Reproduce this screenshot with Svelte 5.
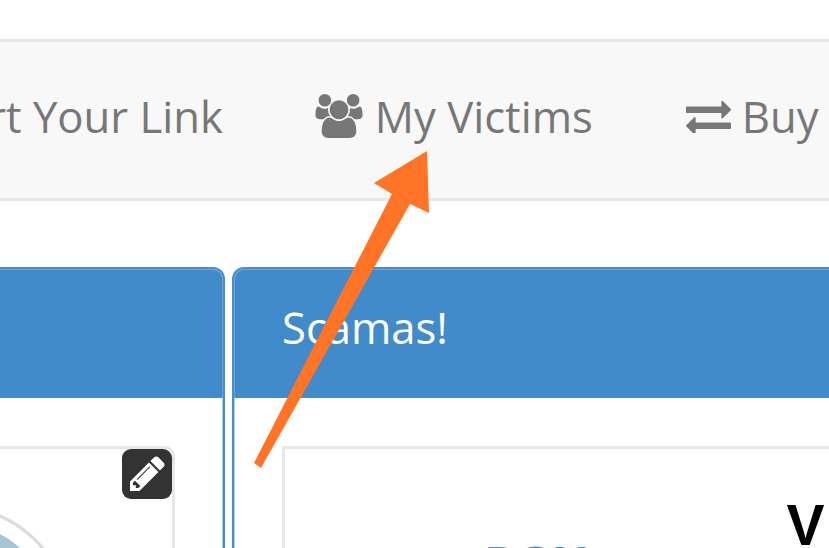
<script>
  let links = [
    { label: 'Report Your Link', icon: null },
    { label: 'My Victims', icon: 'users' },
    { label: 'Buy Scamas', icon: 'exchange' }
  ];
</script>

<div class="page">
  <nav>
    {#each links as link}
      <a href="#top" class="link">
        {#if link.icon === 'users'}
          <svg class="users" viewBox="64 0 1920 1792" aria-hidden="true">
            <path d="M657 896q-162 5-265 128h-134q-82 0-138-40.500t-56-118.500q0-353 124-353 6 0 43.500 21t97.500 42.500 119 21.500q67 0 133-23-5 37-5 66 0 139 81 256zm1071 637q0 120-73 189.500t-194 69.500h-874q-121 0-194-69.500t-73-189.500q0-53 3.500-103.500t14-109 26.500-108.500 43-97.500 62-81 85.500-53.500 111.500-20q10 0 43 21.500t73 48 107 48 135 21.500 135-21.500 107-48 73-48 43-21.500q61 0 111.500 20t85.500 53.500 62 81 43 97.500 26.500 108.500 14 109 3.500 103.500zm-1024-1277q0 106-75 181t-181 75-181-75-75-181 75-181 181-75 181 75 75 181zm704 384q0 159-112.500 271.500t-271.500 112.500-271.500-112.500-112.500-271.500 112.500-271.500 271.500-112.500 271.500 112.500 112.500 271.500zm576 225q0 78-56 118.500t-138 40.500h-134q-103-123-265-128 81-117 81-256 0-29-5-66 66 23 133 23 59 0 119-21.500t97.500-42.500 43.500-21q124 0 124 353zm-128-609q0 106-75 181t-181 75-181-75-75-181 75-181 181-75 181 75 75 181z" />
          </svg>
        {:else if link.icon === 'exchange'}
          <svg class="exchange" viewBox="0 256 1792 1312" aria-hidden="true">
            <path d="M1792 1184v192q0 13-9.500 22.500t-22.500 9.500h-1376v192q0 13-9.500 22.500t-22.500 9.500q-12 0-24-10l-319-320q-9-9-9-22 0-14 9-23l320-320q9-9 23-9 13 0 22.500 9.500t9.500 22.500v192h1376q13 0 22.500 9.500t9.500 22.500zm0-544q0 14-9 23l-320 320q-9 9-23 9-13 0-22.500-9.500t-9.500-22.500v-192h-1376q-13 0-22.500-9.500t-9.500-22.500v-192q0-13 9.500-22.500t22.500-9.500h1376v-192q0-14 9-23t23-9q12 0 24 10l319 319q9 9 9 23z" />
          </svg>
        {/if}
        {link.label}
      </a>
    {/each}
  </nav>

  <div class="panels">
    <section class="panel left">
      <div class="head"></div>
      <div class="body">
        <div class="card">
          <button class="edit" aria-label="Edit">
            <svg viewBox="128 128 1536 1536" aria-hidden="true">
              <path d="M491 1536l91-91-235-235-91 91v107h128v128h107zm523-928q0-22-22-22-10 0-17 7l-542 542q-7 7-7 17 0 22 22 22 10 0 17-7l542-542q7-7 7-17zm-54-192l416 416-832 832h-416v-416zm683 96q0 53-37 90l-166 166-416-416 166-165q36-38 90-38 53 0 91 38l235 234q37 39 37 91z" />
            </svg>
          </button>
          <div class="avatar"></div>
        </div>
      </div>
    </section>

    <section class="panel right">
      <div class="head"><h2>Scamas!</h2></div>
      <div class="body">
        <div class="card wide">
          <span class="logo">BOX</span>
          <span class="big">V</span>
        </div>
      </div>
    </section>
  </div>

  <svg class="arrow" viewBox="0 0 829 548" aria-hidden="true">
    <polygon points="254,463 261,468 410,204 429,213 427,151 374,183 392,194" />
  </svg>
</div>

<style>
  :global(body) {
    margin: 0;
    background: #fff;
  }
  .page {
    position: relative;
    width: 829px;
    height: 548px;
    overflow: hidden;
    padding-top: 39px;
    box-sizing: border-box;
    font-family: 'Open Sans', sans-serif;
  }
  nav {
    display: flex;
    align-items: center;
    gap: 93px;
    height: 156px;
    margin-left: -116px;
    background: #f8f8f8;
    border-top: 3px solid #e7e7e7;
    border-bottom: 3px solid #e7e7e7;
    width: 1200px;
  }
  .link {
    display: flex;
    align-items: center;
    gap: 12px;
    margin-bottom: 8px;
    color: #777;
    font-size: 43.6px;
    text-decoration: none;
    white-space: nowrap;
  }
  .link:first-child {
    margin-right: -1px;
  }
  .users {
    width: 48px;
    height: 44px;
    fill: #777;
  }
  .exchange {
    width: 45px;
    height: 33px;
    margin-right: -1px;
    fill: #777;
  }
  .panels {
    display: flex;
    gap: 7px;
    margin-top: 66px;
    margin-left: -300px;
  }
  .panel {
    border: 2px solid #4a8ec9;
    border-bottom: 0;
    border-radius: 12px 12px 0 0;
    box-shadow: inset 0 0 0 1px #a7cbe8;
    height: 290px;
    box-sizing: border-box;
    flex: none;
  }
  .left {
    width: 525px;
  }
  .right {
    width: 800px;
  }
  .head {
    height: 129px;
    box-sizing: border-box;
    background: #428bca;
    border-radius: 10px 10px 0 0;
    box-shadow: inset 0 1px 0 #6ba3d6, inset 1px 0 0 #6ba3d6, inset -1px 0 0 #6ba3d6;
    display: flex;
    align-items: center;
    padding: 0 0 14px 48px;
  }
  h2 {
    margin: 0;
    color: #fff;
    font-size: 43.6px;
    font-weight: 400;
  }
  .body {
    padding: 48px 48px 0;
  }
  .card {
    position: relative;
    height: 200px;
    border: 3px solid #e7e7e7;
    border-radius: 10px;
  }
  .edit {
    position: absolute;
    top: 0;
    right: 0;
    width: 50px;
    height: 50px;
    padding: 7px 7px 8px 8px;
    border: 0;
    border-radius: 9px;
    background: #333;
  }
  .edit svg {
    display: block;
    width: 35px;
    height: 35px;
    fill: #fff;
  }
  .avatar {
    position: absolute;
    left: 87px;
    top: 56px;
    width: 230px;
    height: 230px;
    box-sizing: border-box;
    border: 3px solid #ddd;
    border-radius: 50%;
    background: #a5c5d4;
    box-shadow: inset 0 0 0 15px #fff;
  }
  .wide {
    display: flex;
    align-items: flex-start;
    padding-left: 199px;
    border-radius: 0;
    border-right: 0;
    width: 560px;
    box-sizing: border-box;
  }
  .logo {
    margin-top: 82px;
    color: #428bca;
    font-size: 48px;
    font-weight: 700;
  }
  .big {
    margin-top: 43px;
    margin-left: 200px;
    color: #000;
    font-size: 57px;
    font-weight: 700;
    font-family: 'Liberation Sans', sans-serif;
  }
  .arrow {
    position: absolute;
    inset: 0;
    width: 829px;
    height: 548px;
    fill: #ff7426;
  }
</style>
